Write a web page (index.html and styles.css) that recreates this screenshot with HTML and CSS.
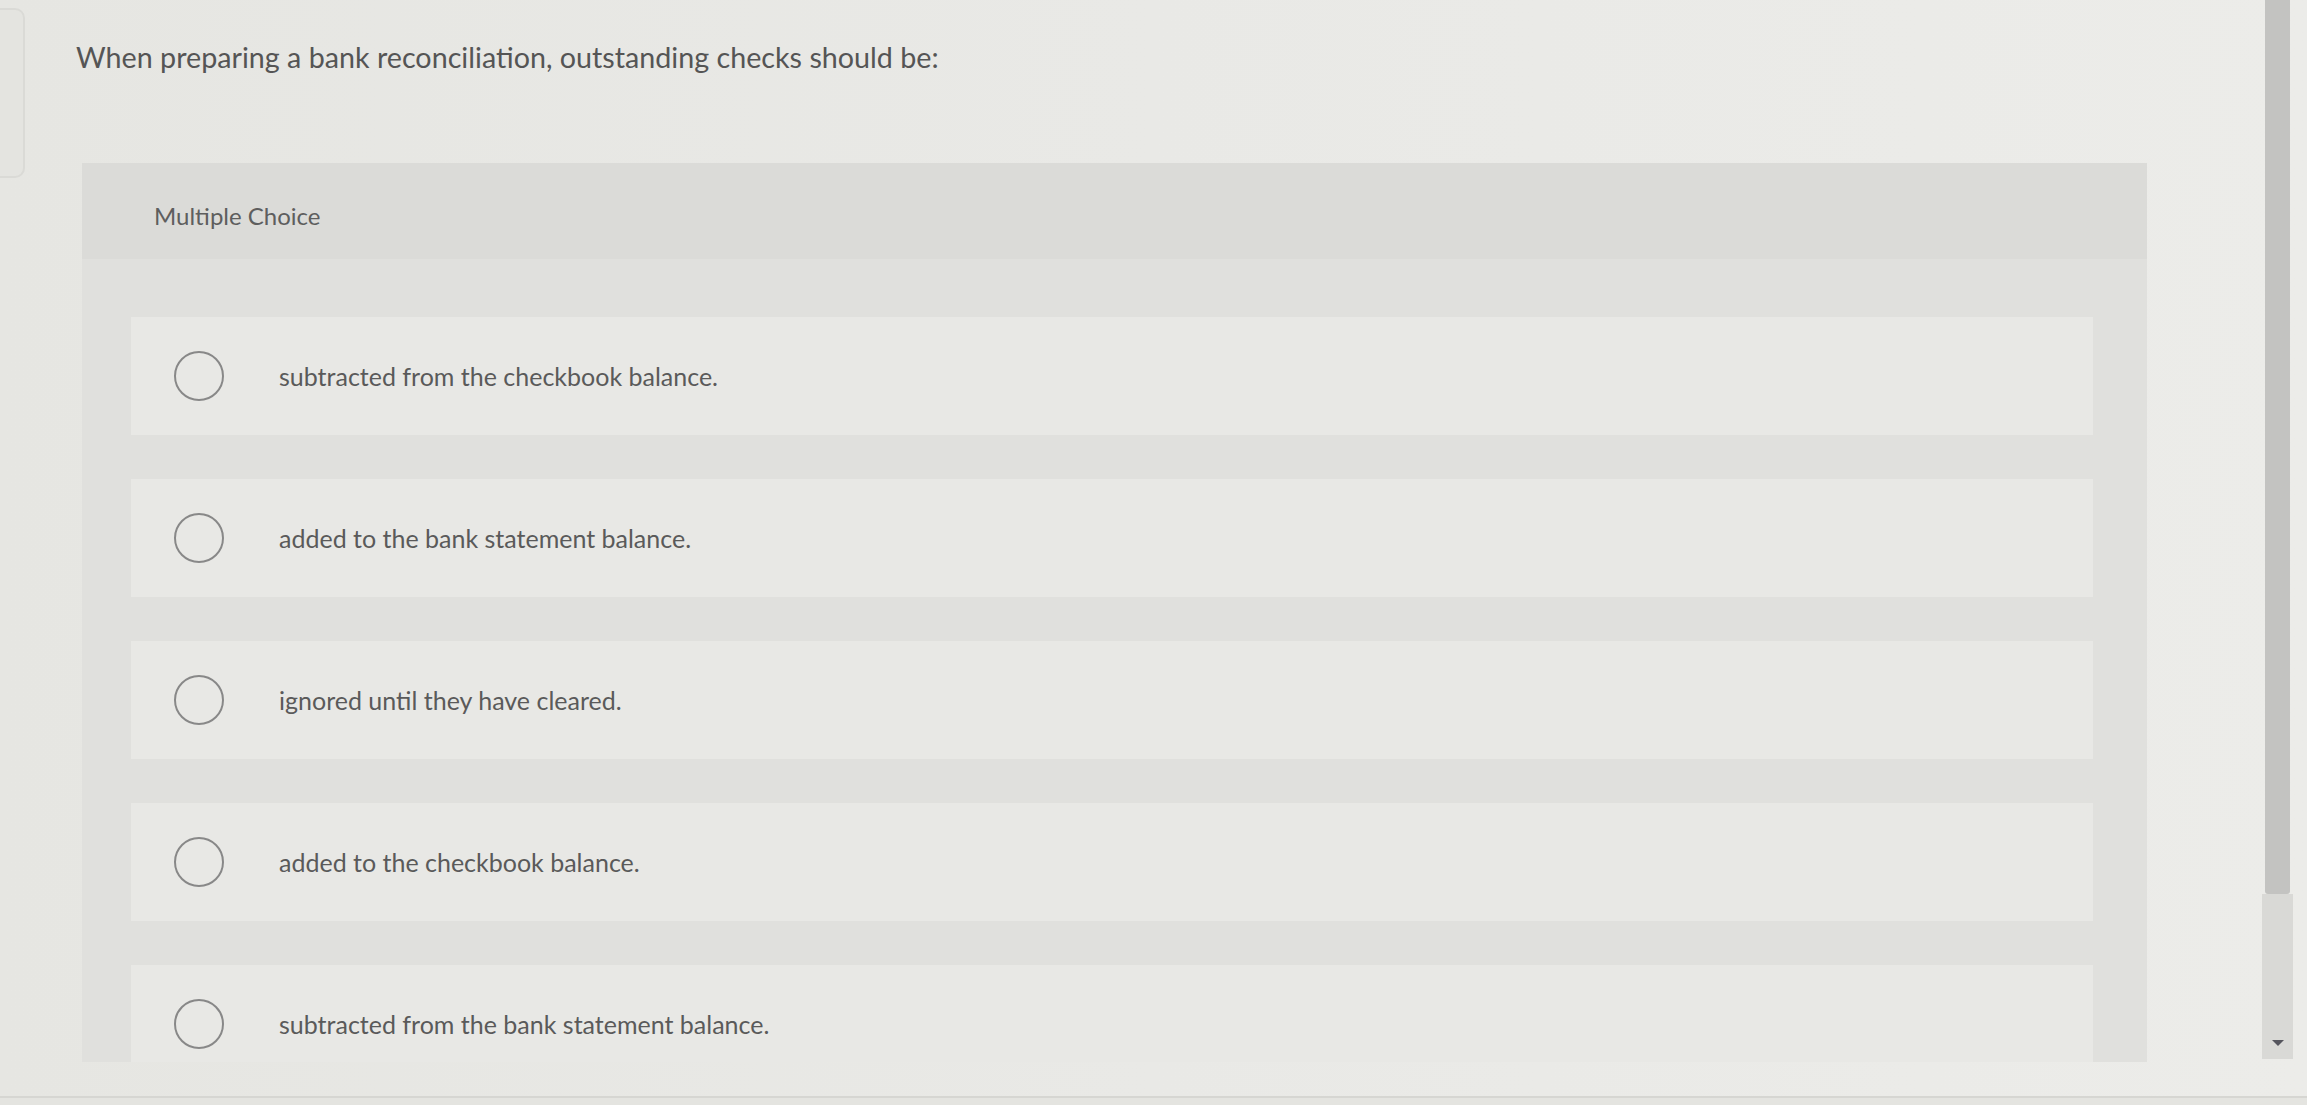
FILE: index.html
```html
<!DOCTYPE html>
<html lang="en">
<head>
<meta charset="utf-8">
<title>Multiple Choice</title>
<link rel="stylesheet" href="styles.css">
</head>
<body>
<div class="page">
  <div class="stub"></div>
  <main class="main">
    <p class="question">When preparing a bank reconciliation, outstanding checks should be:</p>
    <section class="mc">
      <div class="mc-header">Multiple Choice</div>
      <div class="mc-body">
        <label class="option"><span class="radio"></span><span class="option-text">subtracted from the checkbook balance.</span></label>
        <label class="option"><span class="radio"></span><span class="option-text">added to the bank statement balance.</span></label>
        <label class="option"><span class="radio"></span><span class="option-text">ignored until they have cleared.</span></label>
        <label class="option"><span class="radio"></span><span class="option-text">added to the checkbook balance.</span></label>
        <label class="option"><span class="radio"></span><span class="option-text">subtracted from the bank statement balance.</span></label>
      </div>
    </section>
  </main>
  <div class="scrollbar">
    <div class="thumb"></div>
    <div class="track"><span class="arrow"></span></div>
  </div>
</div>
</body>
</html>
```
FILE: styles.css
```css
html, body {
  margin: 0;
  padding: 0;
}
body {
  background: #e4e4e0;
  font-family: Lato, "Open Sans", sans-serif;
  overflow: hidden;
}
.page {
  display: flex;
  height: 1096px;
  border-bottom: 2px solid #d6d6d2;
  background: linear-gradient(90deg, #e6e6e2 0%, #e9e9e6 50%, #ecece9 100%);
  overflow: hidden;
}
.stub {
  flex: none;
  width: 23px;
  height: 166px;
  margin-top: 8px;
  border: 2px solid #dadad6;
  border-left: 0;
  border-radius: 0 10px 10px 0;
  background: #e4e4e0;
}
.main {
  flex: 1;
  padding-left: 51px;
}
.question {
  margin: 40px 0 0;
  font-size: 28.7px;
  line-height: 34px;
  color: #555555;
}
.mc {
  margin: 89px 0 0 6px;
  width: 2065px;
  height: 899px;
  background: #e0e0dd;
  overflow: hidden;
}
.mc-header {
  height: 96px;
  display: flex;
  align-items: center;
  padding-left: 72px;
  padding-top: 8px;
  box-sizing: border-box;
  background: #dbdbd8;
  font-size: 24px;
  color: #5e5e5e;
}
.mc-body {
  display: flex;
  flex-direction: column;
  gap: 44px;
  padding: 58px 54px 0 49px;
}
.option {
  flex: none;
  height: 118px;
  display: flex;
  align-items: center;
  padding-left: 43px;
  background: #e8e8e5;
}
.radio {
  flex: none;
  width: 46px;
  height: 46px;
  border: 2px solid #888888;
  border-radius: 50%;
}
.option-text {
  margin-left: 55px;
  font-size: 25px;
  color: #5a5a5a;
}
.scrollbar {
  flex: none;
  width: 31px;
  margin-right: 14px;
  display: flex;
  flex-direction: column;
}
.thumb {
  height: 894px;
  margin: 0 3px;
  background: #c3c3c1;
  border-radius: 0 0 3px 3px;
}
.track {
  height: 165px;
  background: #d9d9d6;
  display: flex;
  align-items: flex-end;
  justify-content: center;
}
.arrow {
  width: 0;
  height: 0;
  margin-bottom: 13px;
  border-left: 6px solid transparent;
  border-right: 6px solid transparent;
  border-top: 6px solid #55555d;
}
```
